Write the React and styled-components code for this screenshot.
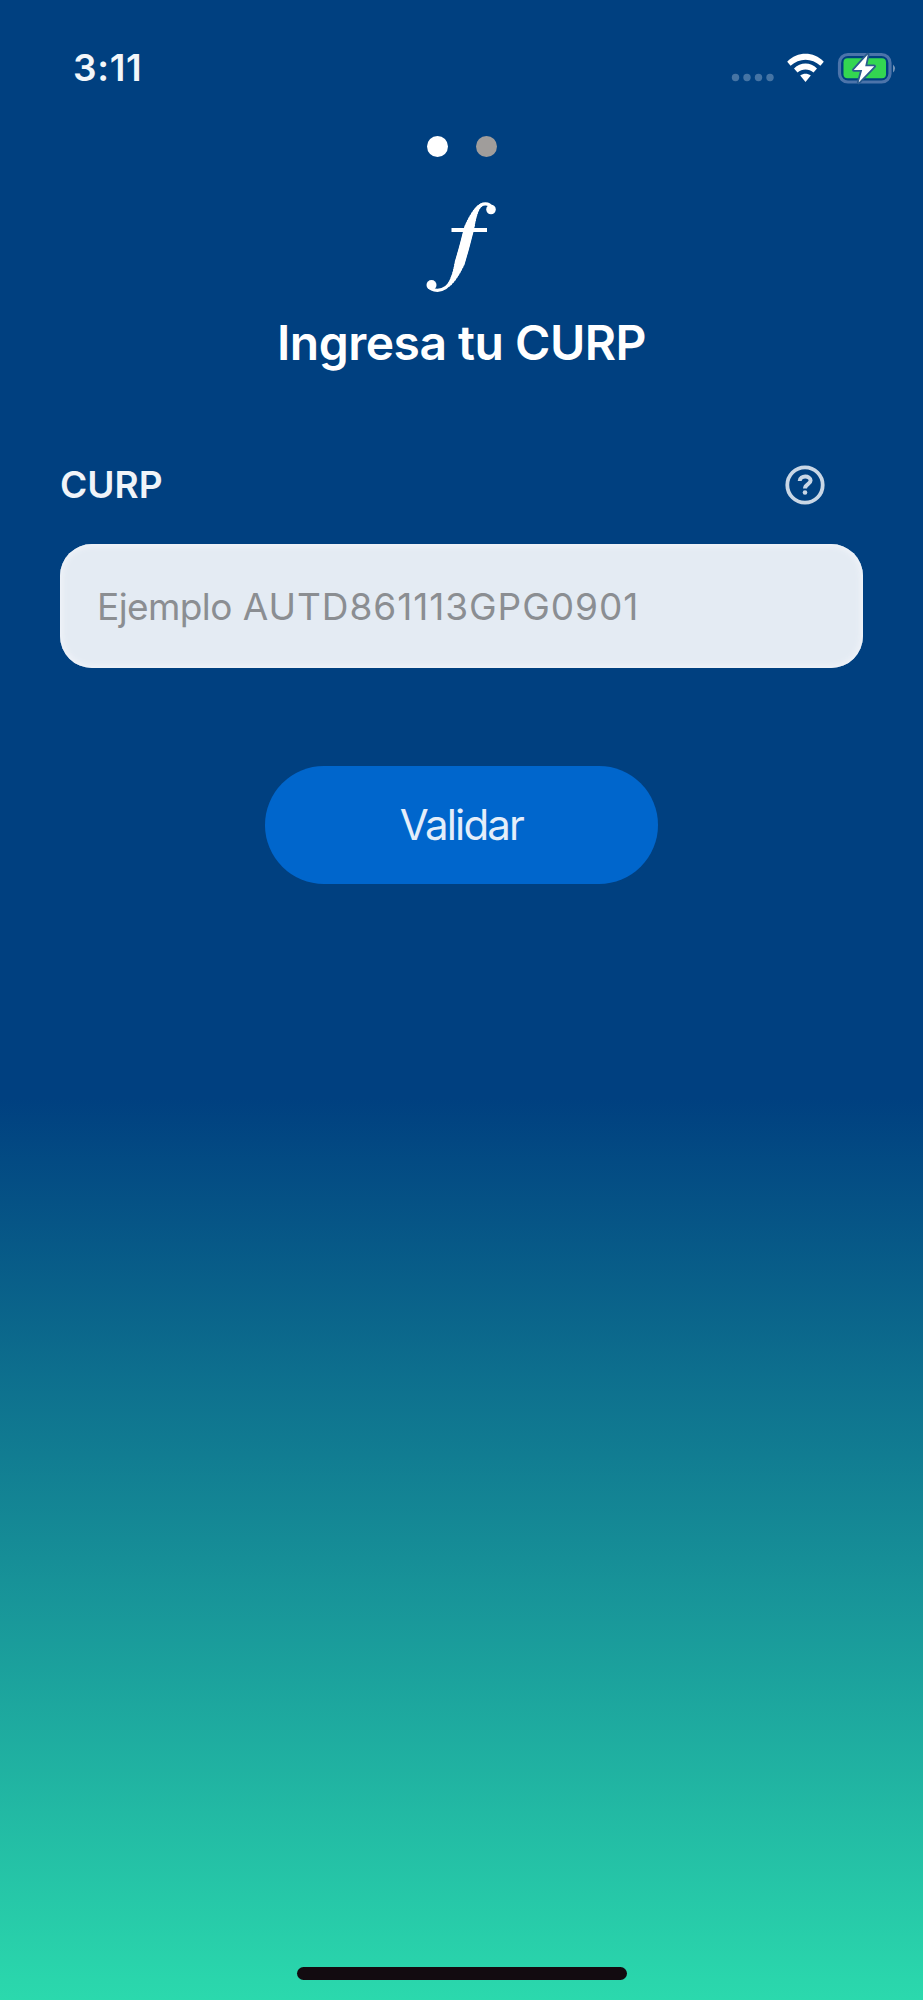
import { useState } from 'react';
import styled, { createGlobalStyle } from 'styled-components';

const GlobalStyle = createGlobalStyle`
  *, *::before, *::after {
    box-sizing: border-box;
  }

  body {
    margin: 0;
    font-family: Inter, "Liberation Sans", sans-serif;
  }
`;

const Screen = styled.div`
  display: flex;
  flex-direction: column;
  width: 100%;
  height: 2000px;
  background: linear-gradient(to bottom, #004080 0, #004080 1098px, #2bd9ad 2000px);
`;

const StatusBar = styled.header`
  display: flex;
  align-items: center;
  justify-content: space-between;
  height: 136px;
  padding: 0 27px 0 73px;
`;

const Time = styled.span`
  color: #f3f6fa;
  font-size: 37px;
  font-weight: 600;
  line-height: 40px;
  letter-spacing: 0.7px;
`;

const StatusIcons = styled.div`
  display: flex;
  align-items: center;
  gap: 12px;
`;

const Steps = styled.div`
  display: flex;
  justify-content: center;
  gap: 28px;
`;

const Step = styled.span`
  width: 21px;
  height: 21px;
  border-radius: 50%;
  background: ${({ $active }) => ($active ? '#fff' : '#a09d9b')};
`;

const Brand = styled.div`
  display: flex;
  justify-content: center;
  margin-top: 42px;
`;

const Title = styled.h1`
  margin: 19px 0 0;
  color: #fff;
  font-size: 48px;
  font-weight: 600;
  line-height: 58px;
  letter-spacing: -0.5px;
  text-align: center;
`;

const Form = styled.form`
  display: flex;
  flex-direction: column;
  align-items: center;
  padding: 93px 60px 0;
`;

const FieldHeader = styled.div`
  display: flex;
  align-items: center;
  justify-content: space-between;
  width: 100%;
  height: 40px;
  padding-right: 38px;
`;

const Label = styled.label`
  color: #f0f4f9;
  font-size: 37px;
  font-weight: 600;
  line-height: 40px;
`;

const HelpButton = styled.button`
  display: flex;
  padding: 0;
  border: 0;
  background: none;
  color: #c9d7e6;
`;

const Field = styled.div`
  display: grid;
  align-items: center;
  width: 100%;
  height: 124px;
  margin-top: 39px;
  padding: 0 37px;
  border-radius: 32px;
  background: #e4ebf3;
  box-shadow: inset 0 0 6px 2px #f1f4f9;
  font-size: 37px;

  > * {
    grid-area: 1 / 1;
  }
`;

const Input = styled.input`
  width: 100%;
  padding: 0;
  border: 0;
  outline: 0;
  background: none;
  color: #333;
  font: inherit;
`;

const Hint = styled.div`
  display: flex;
  gap: 11px;
  color: #8b8e92;
  pointer-events: none;
`;

const HintText = styled.span`
  letter-spacing: ${({ $wide }) => ($wide ? '0.95px' : '-0.6px')};
`;

const Submit = styled.button`
  width: 393px;
  height: 118px;
  margin-top: 98px;
  padding: 0 0 2px;
  border: 0;
  border-radius: 59px;
  background: #0066cc;
  color: #e4eefa;
  font-family: inherit;
  font-size: 42px;
  letter-spacing: -1.8px;
`;

const HomeIndicator = styled.div`
  width: 330px;
  height: 13px;
  margin: auto auto 20px;
  border-radius: 7px;
  background: #120b10;
`;

const SignalIcon = () => (
  <svg width="43" height="36" viewBox="0 0 43 36" fill="#4574a4">
    <circle cx="4.5" cy="27.5" r="3.7" />
    <circle cx="16" cy="27.5" r="3.7" />
    <circle cx="27.5" cy="27.5" r="3.7" />
    <circle cx="39" cy="27.5" r="3.7" />
  </svg>
);

const WifiIcon = () => (
  <svg width="39" height="36" viewBox="0 0 39 36" fill="#fff">
    <path d="M1.2 11.8C11.5 1.2 27.5 1.2 37.8 11.8L34.4 15.8C25.8 7.6 13.2 7.6 4.6 15.8Z" />
    <path d="M8 18.6C14.5 11.9 24.5 11.9 31 18.6L27.5 22.6C23 18.3 16 18.3 11.5 22.6Z" />
    <path d="M14.2 25.6C17.3 23 21.7 23 24.8 25.6L19.5 32Z" />
  </svg>
);

const BatteryIcon = () => (
  <svg width="59" height="36" viewBox="0 0 59 36">
    <rect x="2.5" y="4.5" width="50.5" height="27.5" rx="8.5" fill="#004080" stroke="#4c74aa" strokeWidth="3.2" />
    <rect x="6.5" y="8.3" width="42.5" height="20" rx="4" fill="#33d651" />
    <path d="M56 14.5q4 4 0 8z" fill="#7594b7" />
    <path
      d="M30.8 4.5 16.8 20h8.4L21.600 32.5 37.2 16.2h-9z"
      fill="#fff"
      stroke="#2a5b8e"
      strokeWidth="3.6"
      strokeLinejoin="round"
      paintOrder="stroke"
    />
  </svg>
);

// The stem swells towards its middle: each layer is wider and shorter than the last
const stemLayers = [0, 1, 2, 3, 4, 5, 6, 7, 8, 9];

const BrandMark = () => (
  <svg width="82" height="96" viewBox="0 0 82 96" fill="none" stroke="#fff" role="img" aria-label="f">
    <path d="M71 9C68 3.5 61 3.5 56.5 9.5C49 20 46 40 41 56C36 74 30 91 16.5 91.3C12 91.3 9 89.5 8 87" strokeWidth="3.2" />
    {stemLayers.map((n) => (
      <path
        key={n}
        d="M62 5.4C60 6 58 7.5 56.5 9.5C49 20 46 40 41 56C37.5 69 33 82 25.5 88"
        pathLength="100"
        strokeWidth={3.4 + n * 0.75}
        strokeDasharray={`${96 - n * 6} 200`}
        strokeDashoffset={-(2 + n * 3)}
      />
    ))}
    <path d="M30.5 31H66" strokeWidth="4.2" />
    <circle cx="70" cy="10.5" r="4.8" fill="#fff" stroke="none" />
    <circle cx="10.5" cy="86" r="5" fill="#fff" stroke="none" />
  </svg>
);

const HelpIcon = () => (
  <svg width="40" height="40" viewBox="0 0 40 40" fill="none" stroke="currentColor">
    <circle cx="20" cy="20" r="17.7" strokeWidth="3.8" />
    <path d="M14.7 16c.2-5.8 10.9-5.8 10.9-.4 0 3.7-5.6 3.6-5.6 8" strokeWidth="4" />
    <circle cx="20" cy="27.5" r="2.3" fill="currentColor" stroke="none" />
  </svg>
);

export default function App() {
  const [curp, setCurp] = useState('');

  return (
    <>
      <GlobalStyle />
      <Screen>
        <StatusBar>
          <Time>3:11</Time>
          <StatusIcons>
            <SignalIcon />
            <WifiIcon />
            <BatteryIcon />
          </StatusIcons>
        </StatusBar>
        <Steps>
          <Step $active />
          <Step />
        </Steps>
        <Brand>
          <BrandMark />
        </Brand>
        <Title>Ingresa tu CURP</Title>
        <Form onSubmit={(e) => e.preventDefault()}>
          <FieldHeader>
            <Label htmlFor="curp">CURP</Label>
            <HelpButton type="button" aria-label="Ayuda">
              <HelpIcon />
            </HelpButton>
          </FieldHeader>
          <Field>
            <Input id="curp" value={curp} onChange={(e) => setCurp(e.target.value)} />
            {!curp && (
              <Hint>
                <HintText>Ejemplo</HintText>
                <HintText $wide>AUTD861113GPG0901</HintText>
              </Hint>
            )}
          </Field>
          <Submit type="submit">Validar</Submit>
        </Form>
        <HomeIndicator />
      </Screen>
    </>
  );
}
